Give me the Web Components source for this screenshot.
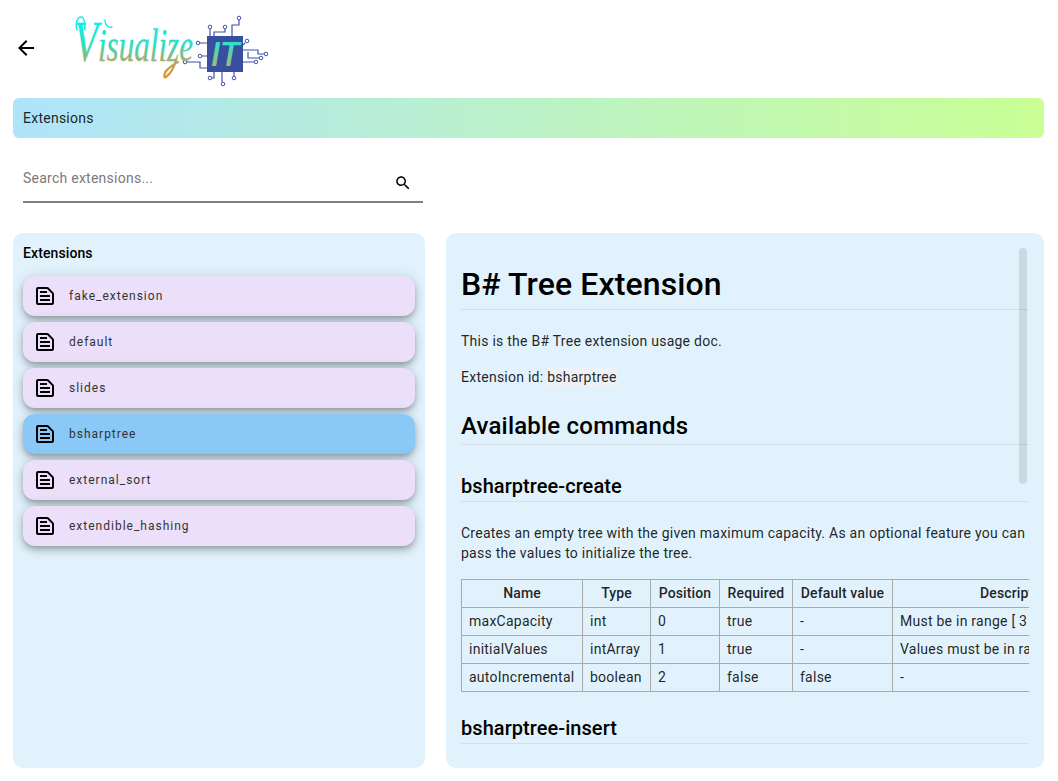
<!DOCTYPE html>
<html>
<head>
<meta charset="utf-8">
<title>Extensions</title>
<style>
  html, body { margin: 0; height: 100%; overflow: hidden; background: #fff; }
  body { font-family: Roboto, "Liberation Sans", sans-serif; color: #000; }
</style>
</head>
<body>
<extensions-page>
  <app-header slot="header"></app-header>
  <page-banner slot="banner">Extensions</page-banner>
  <search-field slot="search" placeholder="Search extensions..."></search-field>
  <extension-list slot="list" heading="Extensions">
    <extension-item>fake_extension</extension-item>
    <extension-item>default</extension-item>
    <extension-item>slides</extension-item>
    <extension-item selected>bsharptree</extension-item>
    <extension-item>external_sort</extension-item>
    <extension-item>extendible_hashing</extension-item>
  </extension-list>
  <doc-panel slot="doc">
    <h1>B# Tree Extension</h1>
    <p class="first">This is the B# Tree extension usage doc.</p>
    <p>Extension id: <code>bsharptree</code></p>
    <h2>Available commands</h2>
    <h3>bsharptree-create</h3>
    <p class="after-h3">Creates an empty tree with the given maximum capacity. As an optional feature you can pass the values to initialize the tree.</p>
    <table>
      <colgroup>
        <col style="width:121px"><col style="width:68px"><col style="width:69px"><col style="width:73px"><col style="width:100px"><col style="width:248px">
      </colgroup>
      <thead>
        <tr><th>Name</th><th>Type</th><th>Position</th><th>Required</th><th>Default value</th><th>Description</th></tr>
      </thead>
      <tbody>
        <tr><td>maxCapacity</td><td>int</td><td>0</td><td>true</td><td>-</td><td>Must be in range [ 3</td></tr>
        <tr><td>initialValues</td><td>intArray</td><td>1</td><td>true</td><td>-</td><td>Values must be in range</td></tr>
        <tr><td>autoIncremental</td><td>boolean</td><td>2</td><td>false</td><td>false</td><td>-</td></tr>
      </tbody>
    </table>
    <h3 class="after-table">bsharptree-insert</h3>
  </doc-panel>
</extensions-page>

<script>
// page shell
class ExtensionsPage extends HTMLElement {
  constructor() {
    super();
    this.attachShadow({ mode: 'open' });
    this.shadowRoot.innerHTML = `
      <style>
        :host { display: block; height: 781px; box-sizing: border-box; padding: 0 14px 13px 13px; overflow: hidden; }
        .layout { display: flex; flex-direction: column; height: 100%; }
        .columns { flex: 1; min-height: 0; display: grid; grid-template-columns: 412px 598px; column-gap: 21px; margin-top: 30px; }
      </style>
      <div class="layout">
        <slot name="header"></slot>
        <slot name="banner"></slot>
        <slot name="search"></slot>
        <div class="columns">
          <slot name="list"></slot>
          <slot name="doc"></slot>
        </div>
      </div>
    `;
  }
}

class AppHeader extends HTMLElement {
  constructor() {
    super();
    this.attachShadow({ mode: 'open' });
    this.shadowRoot.innerHTML = `
      <style>
        :host { display: flex; align-items: flex-start; height: 98px; }
        .back { width: 24px; height: 24px; margin: 36px 0 0 1px; flex: none; }
        .back svg { display: block; }
        svg.logo { display: block; margin: 12px 0 0 34px; flex: none; overflow: visible; }
        .script { font-family: "Liberation Serif", serif; font-style: italic; font-weight: 400; fill: url(#fade); stroke: url(#fade); stroke-width: .3; }
        .it { font-family: Roboto, sans-serif; font-style: italic; font-weight: 500; fill: url(#fadeIt); }
        .trace { fill: none; stroke: #3f54a8; stroke-width: 1.2; }
        .pin { fill: #fff; stroke: #3f54a8; stroke-width: 1; }
      </style>
      <div class="back">
        <svg width="24" height="24" viewBox="0 0 24 24"><path d="M20 11H7.83l5.59-5.59L12 4l-8 8 8 8 1.41-1.41L7.83 13H20v-2z"/></svg>
      </div>
      <svg class="logo" width="200" height="76" viewBox="72 12 200 76">
        <defs>
          <linearGradient id="fade" gradientUnits="userSpaceOnUse" x1="0" y1="18" x2="0" y2="78">
            <stop offset="0" stop-color="#00f5f0"/>
            <stop offset=".45" stop-color="#2fdcc0"/>
            <stop offset=".72" stop-color="#a9ad6c"/>
            <stop offset="1" stop-color="#f28a1e"/>
          </linearGradient>
          <linearGradient id="fadeIt" gradientUnits="userSpaceOnUse" x1="0" y1="40" x2="0" y2="68">
            <stop offset="0" stop-color="#1fe6d8"/>
            <stop offset="1" stop-color="#a9b96a"/>
          </linearGradient>
        </defs>
        <!-- circuit traces -->
        <path class="trace" d="M210 29V36M225 29V32H214V36M239 20V25H232V36M200 43H207M202 56H207M187 62H200V68H207M212 78H214V72M222 82V72M234 76V72M245 43L243 45M243 50H258V54H264M248 52V58H259M243 62H254"/>
        <circle class="pin" cx="210" cy="27" r="1.8"/><circle class="pin" cx="225" cy="27" r="1.8"/><circle class="pin" cx="239" cy="18" r="1.8"/>
        <circle class="pin" cx="198" cy="43" r="1.8"/><circle class="pin" cx="200" cy="56" r="1.8"/><circle class="pin" cx="185" cy="62" r="1.8"/>
        <circle class="pin" cx="210" cy="78" r="1.8"/><circle class="pin" cx="223" cy="84" r="1.8"/><circle class="pin" cx="234" cy="78" r="1.8"/>
        <circle class="pin" cx="247" cy="41" r="1.8"/><circle class="pin" cx="266" cy="54" r="1.8"/><circle class="pin" cx="261" cy="58" r="1.8"/><circle class="pin" cx="256" cy="62" r="1.8"/>
        <rect x="207" y="36" width="36" height="36" fill="#3a4ea0"/>
        <text class="it" x="211" y="66" font-size="33" textLength="29" lengthAdjust="spacingAndGlyphs">IT</text>
        <!-- wordmark -->
        <text class="script" x="74" y="61" font-size="58" textLength="119" lengthAdjust="spacingAndGlyphs">V<tspan font-size="46">isualize</tspan></text>
        <!-- pen flourishes of the wordmark -->
        <path fill="none" stroke="url(#fade)" stroke-width="1.5" stroke-linecap="round" d="M77 30C75 24 77 17 81 17C84 17 85 22 85 30"/>
        <path fill="none" stroke="url(#fade)" stroke-width="1.4" stroke-linecap="round" d="M105 20C105 25 108 28 112 27"/>
        <path fill="none" stroke="url(#fade)" stroke-width="2.2" stroke-linecap="round" d="M176 60C174 68 170 74 166 77C163 79 164 72 168 69C171 66 174 64 178 62"/>
      </svg>
    `;
  }
}

class PageBanner extends HTMLElement {
  constructor() {
    super();
    this.attachShadow({ mode: 'open' });
    this.shadowRoot.innerHTML = `
      <style>
        :host {
          display: flex; align-items: center; height: 40px; box-sizing: border-box; padding-left: 10px;
          border-radius: 6px; background: linear-gradient(90deg, #aee4fb, #c9ff94);
          font-size: 14px; letter-spacing: .25px; color: rgba(0, 0, 0, .87);
        }
      </style>
      <slot></slot>
    `;
  }
}

class SearchField extends HTMLElement {
  constructor() {
    super();
    this.attachShadow({ mode: 'open' });
    const placeholder = this.getAttribute('placeholder') || '';
    this.shadowRoot.innerHTML = `
      <style>
        :host { display: block; width: 400px; height: 65px; margin: 0 0 0 10px; box-sizing: border-box; padding-top: 29px; }
        .row { display: flex; justify-content: space-between; height: 36px; border-bottom: 2px solid #808080; box-sizing: border-box; }
        .hint { font-size: 14px; line-height: 22px; letter-spacing: .25px; color: #7a7a7a; }
        svg { display: block; margin: 7px 11px 0 0; }
      </style>
      <div class="row">
        <span class="hint">${placeholder}</span>
        <svg width="18" height="18" viewBox="0 0 24 24"><path d="M15.5 14h-.79l-.28-.27C15.41 12.59 16 11.11 16 9.5 16 5.91 13.09 3 9.5 3S3 5.91 3 9.5 5.91 16 9.5 16c1.61 0 3.09-.59 4.23-1.57l.27.28v.79l5 4.99L20.49 19l-4.99-5zm-6 0C7.01 14 5 11.99 5 9.5S7.01 5 9.5 5 14 7.01 14 9.5 11.99 14 9.5 14z"/></svg>
      </div>
    `;
  }
}

class ExtensionList extends HTMLElement {
  constructor() {
    super();
    this.attachShadow({ mode: 'open' });
    const heading = this.getAttribute('heading') || '';
    this.shadowRoot.innerHTML = `
      <style>
        :host { display: block; height: 100%; box-sizing: border-box; padding: 10px; border-radius: 10px; background: #e1f2fc; }
        .title { font-size: 14px; font-weight: 500; line-height: 20px; letter-spacing: .1px; margin: 0 0 13px; }
        .items { display: flex; flex-direction: column; gap: 6px; }
      </style>
      <div class="title">${heading}</div>
      <div class="items"><slot></slot></div>
    `;
  }
}

class ExtensionItem extends HTMLElement {
  constructor() {
    super();
    this.attachShadow({ mode: 'open' });
    this.shadowRoot.innerHTML = `
      <style>
        :host {
          display: flex; align-items: center; gap: 12px; height: 40px; box-sizing: border-box; padding-left: 10px;
          border-radius: 12px; background: #ecdff9;
          box-shadow: 0 3px 5px -1px rgba(0,0,0,.2), 0 5px 8px rgba(0,0,0,.14), 0 1px 14px rgba(0,0,0,.12);
          font-size: 12px; letter-spacing: 1px; color: #333;
        }
        :host([selected]) { background: #89c8f7; }
        svg { display: block; flex: none; }
      </style>
      <svg width="24" height="24" viewBox="0 0 24 24"><path d="M14.17 5L19 9.83V19H5V5h9.17m0-2H5c-1.1 0-2 .9-2 2v14c0 1.1.9 2 2 2h14c1.1 0 2-.9 2-2V9.83c0-.53-.21-1.04-.59-1.41l-4.83-4.83c-.37-.38-.88-.59-1.41-.59zM7 15h10v2H7v-2zm0-4h10v2H7v-2zm0-4h7v2H7V7z"/></svg>
      <slot></slot>
    `;
  }
}

// markdown view, scrolled content is clipped on the right side
class DocPanel extends HTMLElement {
  constructor() {
    super();
    this.attachShadow({ mode: 'open' });
    this.shadowRoot.innerHTML = `
      <style>
        :host { display: block; position: relative; height: 100%; box-sizing: border-box; padding: 31px 15px 0; border-radius: 10px; background: #e1f2fc; overflow: hidden; }
        .clip { height: 100%; overflow: hidden; font-size: 14px; line-height: 20px; letter-spacing: .25px; color: rgba(0,0,0,.87); }
        .thumb { position: absolute; top: 15px; right: 17px; width: 8px; height: 236px; border-radius: 4px; background: rgba(0,0,0,.1); }
        ::slotted(h1), ::slotted(h2), ::slotted(h3) { font-weight: 500; color: #000; border-bottom: 1px solid #d3e0ea; }
        ::slotted(h1) { font-size: 32px; line-height: 40px; letter-spacing: .12px; margin: 0; padding-bottom: 5px; }
        ::slotted(h2) { font-size: 24px; line-height: 30px; letter-spacing: .2px; margin: 24px 0 0; padding-bottom: 3px; }
        ::slotted(h3) { font-size: 20px; line-height: 26px; letter-spacing: .06px; margin: 28px 0 0; padding-bottom: 2px; }
        ::slotted(h3.after-table) { margin-top: 23px; }
        ::slotted(p) { margin: 16px 0 0; }
        ::slotted(p.first) { margin-top: 21px; }
        ::slotted(p.after-h3) { margin-top: 21px; }
        ::slotted(table) { margin-top: 16px; }
      </style>
      <div class="clip"><slot></slot></div>
      <div class="thumb"></div>
    `;
  }
}

customElements.define('extensions-page', ExtensionsPage);
customElements.define('app-header', AppHeader);
customElements.define('page-banner', PageBanner);
customElements.define('search-field', SearchField);
customElements.define('extension-list', ExtensionList);
customElements.define('extension-item', ExtensionItem);
customElements.define('doc-panel', DocPanel);
</script>
<style>
  /* light dom of doc-panel: table and inline code */
  doc-panel code { font-family: inherit; background: #eef2f6; padding: 2px 0; }
  doc-panel table { border-collapse: collapse; table-layout: fixed; width: 679px; border: 1px solid #999; border-right: 0; }
  doc-panel th, doc-panel td { border: 1px solid #aaa; height: 28px; padding: 0 7px 2px; text-align: left; white-space: nowrap; box-sizing: border-box; }
  doc-panel th { font-weight: 500; text-align: center; color: rgba(0,0,0,.87); letter-spacing: .12px; }
</style>
</body>
</html>
